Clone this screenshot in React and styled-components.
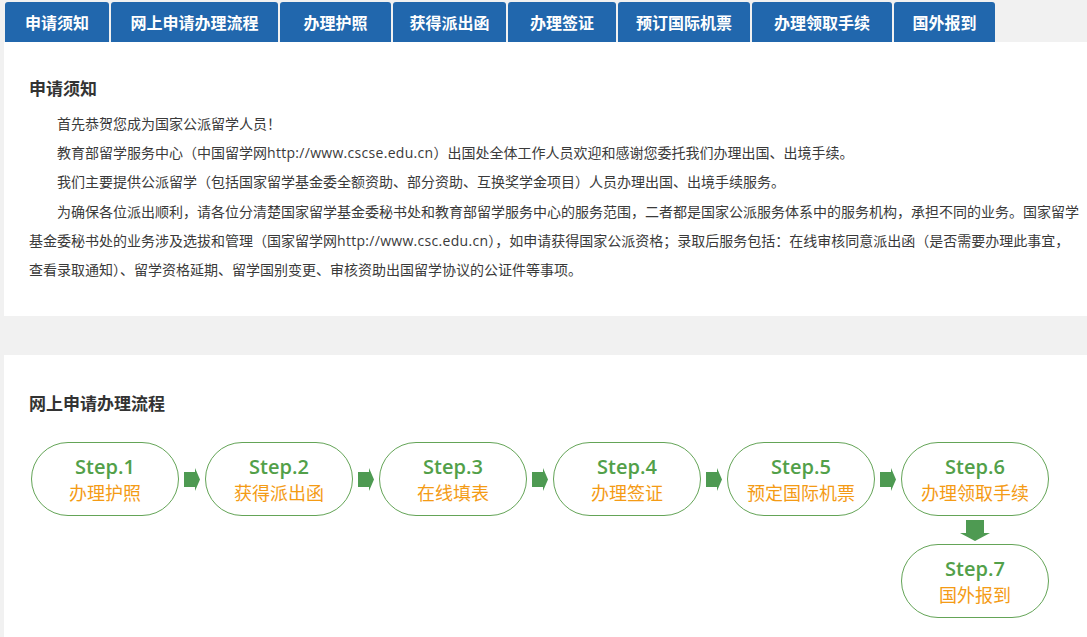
import styled, { createGlobalStyle } from "styled-components";

const GlobalStyle = createGlobalStyle`
  html, body {
    margin: 0;
    padding: 0;
    background: #f1f1f1;
  }
  body {
    font-family: "Open Sans", "Noto Sans CJK SC", sans-serif;
    color: #333;
  }
`;

const Page = styled.div`
  padding-left: 4px;
  overflow: hidden;
`;

const TabBar = styled.div`
  display: flex;
  gap: 2px;
  padding: 2px 0 0 1px;
`;

const Tab = styled.div`
  width: ${(p) => p.w}px;
  height: 40px;
  flex-shrink: 0;
  display: flex;
  align-items: center;
  justify-content: center;
  background: #2167ad;
  color: #fff;
  font-family: "Noto Sans CJK SC", sans-serif;
  font-size: 16px;
  font-weight: 700;
  border-radius: 3px 3px 0 0;
  cursor: pointer;
`;

const Panel = styled.section`
  background: #fff;
  padding: ${(p) => p.pad};
  margin-bottom: ${(p) => p.mb || 0}px;
`;

const Title = styled.h2`
  margin: 0;
  font-family: "Noto Sans CJK SC", sans-serif;
  font-size: 17px;
  font-weight: 700;
  line-height: 24px;
  color: #333;
`;

const Notice = styled.div`
  margin-top: 9px;
  width: 1051px;
`;

const Para = styled.p`
  margin: 0;
  font-size: 14px;
  line-height: 29.2px;
  text-indent: 2em;
  color: #3a3a3a;
`;

const Url = styled.span`
  letter-spacing: 0.3px;
`;

const Flow = styled.div`
  display: flex;
  align-items: flex-start;
  margin: 27px 0 0 2px;
`;

const Column = styled.div`
  display: flex;
  flex-direction: column;
  align-items: center;
`;

const Pill = styled.div`
  width: 148px;
  height: 74px;
  box-sizing: border-box;
  border: 1px solid #64a457;
  border-radius: 37px;
  display: flex;
  flex-direction: column;
  align-items: center;
  justify-content: center;
`;

const StepNo = styled.div`
  font-family: "Open Sans", sans-serif;
  font-size: 20px;
  font-weight: 600;
  line-height: 26px;
  color: #52a049;
`;

const StepName = styled.div`
  font-family: "Noto Sans CJK SC", sans-serif;
  font-size: 18px;
  line-height: 25px;
  color: #f49b15;
`;

const RightSlot = styled.div`
  width: 26px;
  height: 74px;
  display: flex;
  align-items: center;
  justify-content: center;
`;

const DownSlot = styled.div`
  height: 28px;
  display: flex;
  align-items: center;
  justify-content: center;
`;

const ArrowRight = () => (
  <svg width="16" height="23" viewBox="0 0 16 23">
    <polygon points="0,4 11,4 11,0 16,11.5 11,23 11,19 0,19" fill="#4e9a52" />
  </svg>
);

const ArrowDown = () => (
  <svg width="30" height="21" viewBox="0 0 30 21">
    <polygon points="6,0 24,0 24,13 30,13 15,21 0,13 6,13" fill="#4e9a52" />
  </svg>
);

const tabs = [
  ["申请须知", 104],
  ["网上申请办理流程", 167],
  ["办理护照", 111],
  ["获得派出函", 113],
  ["办理签证", 108],
  ["预订国际机票", 132],
  ["办理领取手续", 140],
  ["国外报到", 101],
];

const steps = ["办理护照", "获得派出函", "在线填表", "办理签证", "预定国际机票", "办理领取手续"];

const Step = ({ n, name }) => (
  <Pill>
    <StepNo>Step.{n}</StepNo>
    <StepName>{name}</StepName>
  </Pill>
);

export default function App() {
  return (
    <Page>
      <GlobalStyle />
      <TabBar>
        {tabs.map(([t, w]) => (
          <Tab key={t} w={w}>
            {t}
          </Tab>
        ))}
      </TabBar>

      <Panel pad="34px 0 32px 25px" mb={39}>
        <Title>申请须知</Title>
        <Notice>
          <Para>首先恭贺您成为国家公派留学人员！</Para>
          <Para>
            教育部留学服务中心（中国留学网<Url>http://www.cscse.edu.cn</Url>）出国处全体工作人员欢迎和感谢您委托我们办理出国、出境手续。
          </Para>
          <Para>
            我们主要提供公派留学（包括国家留学基金委全额资助、部分资助、互换奖学金项目）人员办理出国、出境手续服务。
          </Para>
          <Para>
            为确保各位派出顺利，请各位分清楚国家留学基金委秘书处和教育部留学服务中心的服务范围，二者都是国家公派服务体系中的服务机构，承担不同的业务。国家留学基金委秘书处的业务涉及选拔和管理（国家留学网<Url>http://www.csc.edu.cn</Url>），如申请获得国家公派资格；录取后服务包括：在线审核同意派出函（是否需要办理此事宜，查看录取通知）、留学资格延期、留学国别变更、审核资助出国留学协议的公证件等事项。
          </Para>
        </Notice>
      </Panel>

      <Panel pad="36px 0 20px 25px">
        <Title>网上申请办理流程</Title>
        <Flow>
          {steps.map((s, i) => (
            <Column key={s}>
              {i < 5 ? (
                <Step n={i + 1} name={s} />
              ) : (
                <>
                  <Step n={6} name={s} />
                  <DownSlot>
                    <ArrowDown />
                  </DownSlot>
                  <Step n={7} name="国外报到" />
                </>
              )}
            </Column>
          )).flatMap((el, i) =>
            i < 5
              ? [
                  el,
                  <RightSlot key={"a" + i}>
                    <ArrowRight />
                  </RightSlot>,
                ]
              : [el]
          )}
        </Flow>
      </Panel>
    </Page>
  );
}
